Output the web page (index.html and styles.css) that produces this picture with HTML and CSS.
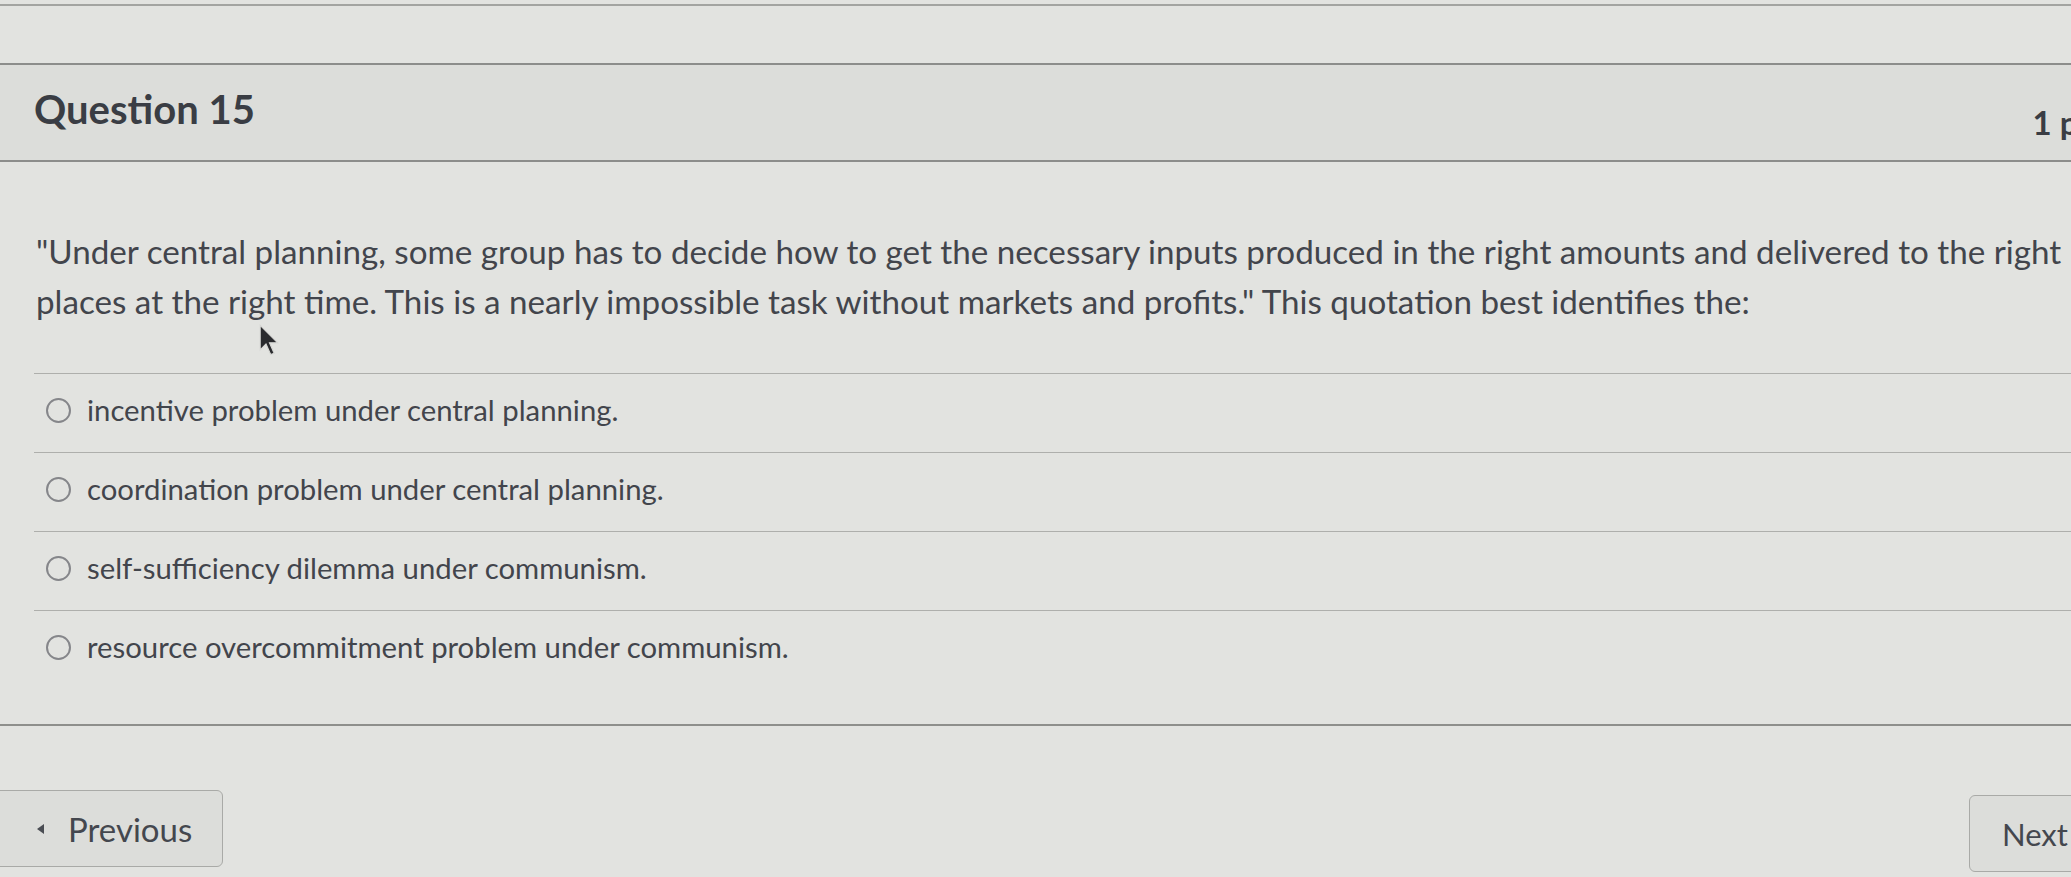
FILE: index.html
```html
<!DOCTYPE html>
<html lang="en">
<head>
<meta charset="utf-8">
<title>Question 15</title>
<link rel="stylesheet" href="styles.css">
</head>
<body>
<div class="top-strip"></div>
<div class="question">
  <div class="question-header">
    <h2 class="question-title">Question 15</h2>
    <span class="question-points">1 pts</span>
  </div>
  <div class="question-body">
    <p class="question-text">"Under central planning, some group has to decide how to get the necessary inputs produced in the right amounts and delivered to the right<br>places at the right time. This is a nearly impossible task without markets and profits." This quotation best identifies the:</p>
    <div class="answers">
      <label class="answer"><span class="radio"></span><span class="answer-text">incentive problem under central planning.</span></label>
      <label class="answer"><span class="radio"></span><span class="answer-text">coordination problem under central planning.</span></label>
      <label class="answer"><span class="radio"></span><span class="answer-text">self-sufficiency dilemma under communism.</span></label>
      <label class="answer"><span class="radio"></span><span class="answer-text">resource overcommitment problem under communism.</span></label>
    </div>
  </div>
</div>
<div class="nav">
  <button class="btn btn-prev"><span class="arrow-left"></span>Previous</button>
  <button class="btn btn-next">Next</button>
</div>
<svg class="cursor" width="21" height="33" viewBox="0 0 18 28"><path d="M1 1 L1 22 L6 17 L10 26 L13 25 L9 16 L16 16 Z" fill="#2a2b2e" stroke="#d8d9d6" stroke-width="1"/></svg>
</body>
</html>
```

FILE: styles.css
```css
html, body {
  margin: 0;
  padding: 0;
}
body {
  width: 2071px;
  height: 877px;
  overflow: hidden;
  position: relative;
  background: #e2e3e0;
  font-family: Lato, "Open Sans", sans-serif;
  color: #42454c;
}
.top-strip {
  height: 4px;
  border-bottom: 2px solid #a3a4a1;
}
.question {
  margin-top: 57px;
}
.question-header {
  display: flex;
  justify-content: space-between;
  align-items: flex-start;
  height: 95px;
  box-sizing: content-box;
  border-top: 2px solid #8c8d8b;
  border-bottom: 2px solid #8c8d8b;
  background: #dcddda;
  padding: 0 0 0 34px;
  overflow: hidden;
}
.question-title {
  margin: 0;
  padding-top: 20px;
  font-size: 40px;
  line-height: 48px;
  font-weight: 700;
  color: #3a3d44;
}
.question-points {
  padding-top: 33px;
  font-size: 33px;
  line-height: 48px;
  font-weight: 700;
  color: #3a3d44;
  margin-right: -34px;
  white-space: nowrap;
}
.question-body {
  padding: 64px 0 35px 34px;
}
.question-text {
  margin: 0 0 47px 2px;
  font-size: 33.2px;
  line-height: 50px;
  white-space: nowrap;
}
.answers {
  display: flex;
  flex-direction: column;
}
.answer {
  display: flex;
  align-items: center;
  height: 78px;
  border-top: 1px solid #aeafac;
  padding-left: 12px;
  font-size: 29.3px;
}
.radio {
  width: 21px;
  height: 21px;
  border: 2.5px solid #85868a;
  border-radius: 50%;
  margin-right: 16px;
  margin-top: -6px;
  flex-shrink: 0;
}
.answer-text {
  margin-top: -8px;
  color: #42454c;
}
.nav {
  border-top: 2px solid #8e8f8c;
  display: flex;
  justify-content: space-between;
  align-items: flex-start;
  padding-top: 64px;
}
.btn {
  font-family: Lato, "Open Sans", sans-serif;
  font-size: 33px;
  color: #44474e;
  background: #dcddda;
  border: 1.5px solid #a9aaa7;
  border-radius: 6px;
  height: 77px;
  display: flex;
  align-items: center;
}
.btn-prev {
  margin-left: -10px;
  width: 233px;
  padding: 0 0 0 46px;
}
.arrow-left {
  width: 0;
  height: 0;
  border-top: 5px solid transparent;
  border-bottom: 5px solid transparent;
  border-right: 7px solid #4a4d53;
  margin-right: 24px;
}
.btn-next {
  margin-top: 5px;
  margin-right: -30px;
  width: 132px;
  padding: 0 0 0 32px;
  font-size: 31px;
}
.cursor {
  position: absolute;
  left: 259px;
  top: 324px;
}
```
